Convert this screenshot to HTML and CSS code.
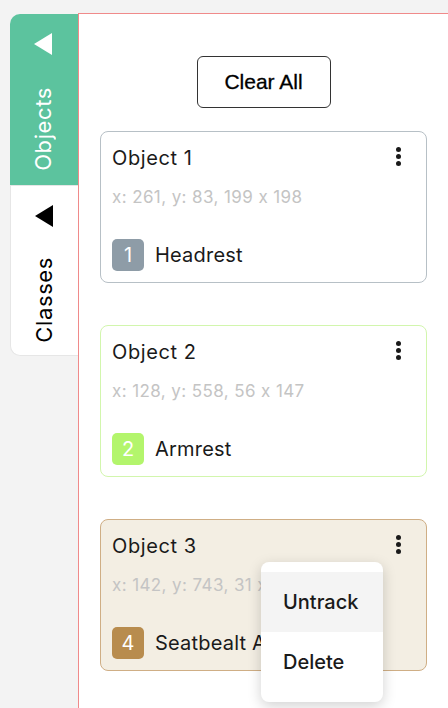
FILE: index.html
```html
<!DOCTYPE html>
<html>
<head>
<meta charset="utf-8">
<link rel="stylesheet" href="styles.css">
</head>
<body>
<div class="app">
  <div class="sidebar">
    <div class="tab tab-objects">
      <svg class="tri" width="18" height="22" viewBox="0 0 18 22"><polygon points="18,0 18,22 0,11" fill="#ffffff"/></svg>
      <span class="tab-label">Objects</span>
    </div>
    <div class="tab tab-classes">
      <svg class="tri" width="18" height="22" viewBox="0 0 18 22"><polygon points="18,0 18,22 0,11" fill="#000000"/></svg>
      <span class="tab-label">Classes</span>
    </div>
  </div>
  <div class="panel">
    <div class="btn-row"><button class="clear-btn">Clear All</button></div>
    <div class="card card-1">
      <div class="card-head"><span class="title">Object 1</span><span class="dots"><i></i><i></i><i></i></span></div>
      <div class="coords">x: 261, y: 83, 199 x 198</div>
      <div class="cls"><span class="badge badge-1">1</span><span class="cls-name">Headrest</span></div>
    </div>
    <div class="card card-2">
      <div class="card-head"><span class="title">Object 2</span><span class="dots"><i></i><i></i><i></i></span></div>
      <div class="coords">x: 128, y: 558, 56 x 147</div>
      <div class="cls"><span class="badge badge-2">2</span><span class="cls-name">Armrest</span></div>
    </div>
    <div class="card card-3">
      <div class="card-head"><span class="title">Object 3</span><span class="dots"><i></i><i></i><i></i></span></div>
      <div class="coords">x: 142, y: 743, 31 x 55</div>
      <div class="cls"><span class="badge badge-3">4</span><span class="cls-name">Seatbealt Anchor</span></div>
      <div class="menu">
        <div class="menu-item active">Untrack</div>
        <div class="menu-item">Delete</div>
      </div>
    </div>
  </div>
</div>
</body>
</html>
```

FILE: styles.css
```css
html, body {
  margin: 0;
  padding: 0;
  height: 100%;
  overflow: hidden;
}
body {
  background: #f3f3f3;
  font-family: "Inter", "DejaVu Sans", sans-serif;
  font-feature-settings: "calt" 0;
  color: #1a1a1a;
}
.app {
  display: flex;
  padding-top: 13px;
  height: 100%;
  box-sizing: border-box;
}
.sidebar {
  width: 68px;
  padding-left: 10px;
  padding-top: 1px;
  display: flex;
  flex-direction: column;
  flex-shrink: 0;
}
.tab {
  height: 171px;
  display: flex;
  flex-direction: column;
  align-items: center;
  box-sizing: border-box;
  padding-top: 19px;
}
.tab-objects {
  background: #5cc39e;
  border-top-left-radius: 10px;
  color: #ffffff;
}
.tab-classes {
  background: #ffffff;
  border-bottom-left-radius: 10px;
  border: 1px solid #e6e6e6;
  border-right: none;
  padding-top: 19px;
  color: #000000;
}
.tri {
  display: block;
  margin-left: -2px;
}
.tab-label {
  writing-mode: vertical-rl;
  transform: rotate(180deg);
  font-size: 22px;
  letter-spacing: 0.6px;
  margin-top: 32px;
  margin-left: -2px;
}
.tab-classes .tab-label {
  margin-top: 30px;
}
.panel {
  flex: 1;
  background: #ffffff;
  border-top: 1px solid #f08a8a;
  border-left: 1px solid #f08a8a;
  padding: 0 21px;
}
.btn-row {
  display: flex;
  justify-content: center;
  padding-top: 42px;
}
.clear-btn {
  width: 134px;
  height: 52px;
  border: 1px solid #333333;
  border-radius: 6px;
  background: #ffffff;
  font-family: "Liberation Sans", Arial, sans-serif;
  font-size: 21px;
  color: #000000;
  padding: 0;
  -webkit-text-stroke: 0.3px #000000;
}
.card {
  position: relative;
  margin-top: 23px;
  border: 1px solid #b7c0c6;
  border-radius: 8px;
  padding: 12px 11px 11px 11px;
  height: 152px;
  box-sizing: border-box;
}
.card + .card {
  margin-top: 42px;
}
.card-2 { border-color: #d2f6ad; }
.card-3 { border-color: #cfae85; background: #f3eee3; }
.card-head {
  display: flex;
  justify-content: space-between;
  align-items: center;
  height: 28px;
}
.title {
  font-size: 20px;
  letter-spacing: 0.6px;
}
.dots {
  display: flex;
  flex-direction: column;
  gap: 2px;
  margin-right: 14px;
  margin-top: -4px;
}
.dots i {
  display: block;
  width: 5px;
  height: 5px;
  border-radius: 50%;
  background: #1a1a1a;
}
.coords {
  margin-top: 13px;
  line-height: 24px;
  font-size: 17px;
  letter-spacing: 0.4px;
  color: #c4c4c4;
}
.cls {
  display: flex;
  align-items: center;
  margin-top: 30px;
  white-space: nowrap;
}
.badge {
  width: 32px;
  height: 32px;
  border-radius: 5px;
  color: #ffffff;
  font-size: 20px;
  display: flex;
  align-items: center;
  justify-content: center;
}
.badge-1 { background: #8e9ca7; }
.badge-2 { background: #b3f56c; }
.badge-3 { background: #b88c4e; }
.cls-name {
  margin-left: 11px;
  font-size: 20px;
  letter-spacing: 0.2px;
}
.menu {
  position: absolute;
  top: 42px;
  left: 160px;
  width: 122px;
  padding: 10px 0;
  background: #ffffff;
  border-radius: 8px;
  box-shadow: 0 4px 14px rgba(0, 0, 0, 0.18);
  z-index: 5;
}
.menu-item {
  height: 60px;
  display: flex;
  align-items: center;
  padding-left: 22px;
  font-size: 20px;
  font-weight: 500;
}
.menu-item.active {
  background: #f4f4f4;
}
```
